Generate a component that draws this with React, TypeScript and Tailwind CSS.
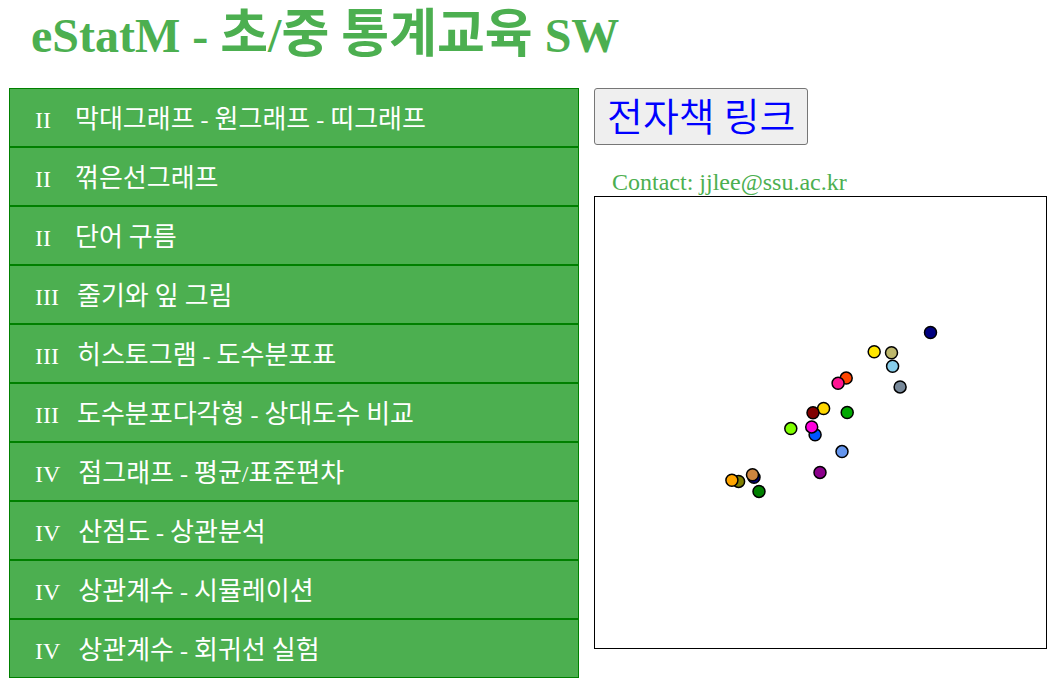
import React from "react";

const serif = "font-['Liberation_Serif','Noto_Sans_CJK_KR',serif]";

const menu = [
  { level: "II", gap: "\u00a0\u00a0\u00a0\u00a0", label: "막대그래프 - 원그래프 - 띠그래프" },
  { level: "II", gap: "\u00a0\u00a0\u00a0\u00a0", label: "꺾은선그래프" },
  { level: "II", gap: "\u00a0\u00a0\u00a0\u00a0", label: "단어 구름" },
  { level: "III", gap: "\u00a0\u00a0\u00a0", label: "줄기와 잎 그림" },
  { level: "III", gap: "\u00a0\u00a0\u00a0", label: "히스토그램 - 도수분포표" },
  { level: "III", gap: "\u00a0\u00a0\u00a0", label: "도수분포다각형 - 상대도수 비교" },
  { level: "IV", gap: "\u00a0\u00a0\u00a0", label: "점그래프 - 평균/표준편차" },
  { level: "IV", gap: "\u00a0\u00a0\u00a0", label: "산점도 - 상관분석" },
  { level: "IV", gap: "\u00a0\u00a0\u00a0", label: "상관계수 - 시뮬레이션" },
  { level: "IV", gap: "\u00a0\u00a0\u00a0", label: "상관계수 - 회귀선 실험" },
];

const points = [
  { x: 335.5, y: 135.5, color: "#000080" },
  { x: 279.2, y: 154.7, color: "#ffe600" },
  { x: 296.5, y: 155.7, color: "#bdb76b" },
  { x: 297.6, y: 169.3, color: "#87ceeb" },
  { x: 305.1, y: 189.9, color: "#778899" },
  { x: 251.2, y: 181.1, color: "#ff4500" },
  { x: 243.1, y: 186.2, color: "#ff1493" },
  { x: 228.6, y: 211.5, color: "#ffd700" },
  { x: 218, y: 215.7, color: "#800000" },
  { x: 252.2, y: 215.5, color: "#00a800" },
  { x: 220.1, y: 237.8, color: "#0055ff" },
  { x: 216.7, y: 229.9, color: "#ff00dd" },
  { x: 195.8, y: 231.6, color: "#7fff00" },
  { x: 247, y: 254.6, color: "#6495ed" },
  { x: 225, y: 275.4, color: "#8b008b" },
  { x: 143.6, y: 284.4, color: "#808000" },
  { x: 136.9, y: 283.2, color: "#ffa500" },
  { x: 159, y: 280.3, color: "#000080" },
  { x: 157.5, y: 277.7, color: "#cd853f" },
  { x: 164, y: 294.4, color: "#008000" },
];

// Hangul is set slightly larger than the Latin text around it.
function Mixed({ text, hangulClass }: { text: string; hangulClass: string }) {
  return (
    <>
      {text.split(/([가-힣]+)/).map((part, i) =>
        i % 2 === 1 ? (
          <span key={i} className={hangulClass}>
            {part}
          </span>
        ) : (
          part
        ),
      )}
    </>
  );
}

export default function App() {
  return (
    <div className={`min-h-screen bg-white pl-[9px] pr-2 pb-2 ${serif}`}>
      <h1 className="h-[88px] pl-[22px] text-5xl leading-[72px] font-bold whitespace-nowrap text-[#4caf50]">
        <Mixed text="eStatM - 초/중 통계교육 SW" hangulClass="text-[52px] leading-none" />
      </h1>

      <main className="grid grid-cols-[570fr_453fr] items-start gap-[15px]">
        <nav>
          <ul>
            {menu.map((item) => (
              <li key={item.label}>
                <a
                  href="#"
                  className="block h-[59px] border border-[green] bg-[#4caf50] pt-0.5 pl-[25px] text-2xl leading-[59px] whitespace-nowrap text-white"
                >
                  {item.level}
                  {item.gap}
                  <Mixed text={item.label} hangulClass="text-[26px] leading-none" />
                </a>
              </li>
            ))}
          </ul>
        </nav>

        <section>
          <button
            type="button"
            className="block h-[57px] rounded-[3px] border border-[#767676] bg-[#efefef] px-3 pt-1.5 text-4xl leading-[49px] font-[350] whitespace-nowrap text-[#0000ff]"
          >
            <Mixed text="전자책 링크" hangulClass="text-[39px] leading-none" />
          </button>
          <p className="mt-6 pl-[18px] text-2xl leading-[27px] text-[#4caf50]">Contact: jjlee@ssu.ac.kr</p>
          <svg
            viewBox="0 0 451 451"
            role="img"
            aria-label="산점도"
            className="block w-full border border-black bg-white"
          >
            {points.map((p, i) => (
              <circle key={i} cx={p.x} cy={p.y} r="6" fill={p.color} stroke="black" strokeWidth="1.5" />
            ))}
          </svg>
        </section>
      </main>
    </div>
  );
}
